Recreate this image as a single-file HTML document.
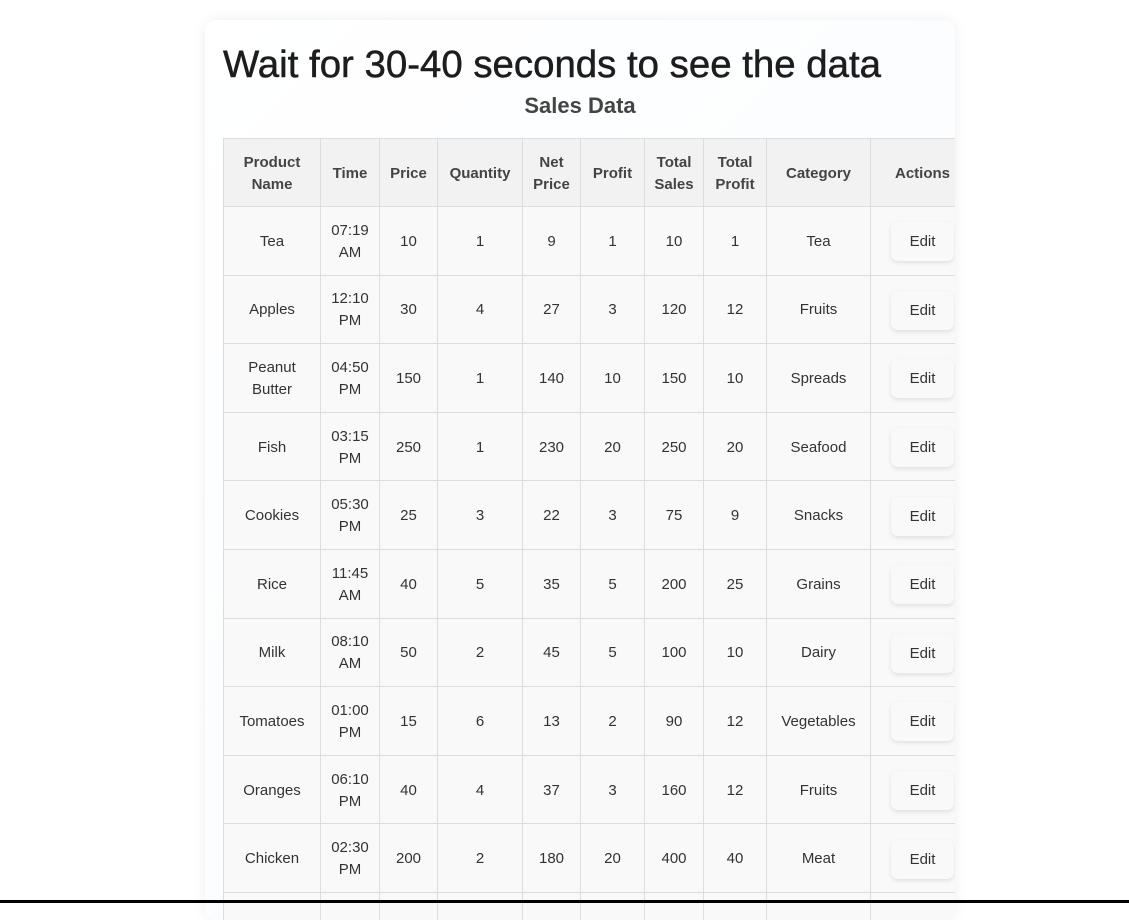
<!DOCTYPE html>
<html><head><meta charset="utf-8"><style>
html,body{margin:0;padding:0;width:1129px;height:903px;overflow:hidden;background:#fff;font-family:"Liberation Sans",sans-serif;}
.card{position:absolute;left:205px;top:20px;width:750px;height:900px;border-radius:12px;background:linear-gradient(135deg,#fff 0%,#f7fbfe 100%);box-shadow:0 0 14px rgba(0,0,0,0.07);overflow:hidden;}
h1{position:absolute;left:18px;top:23px;margin:0;font-size:38.4px;font-weight:normal;color:#1d1d1d;-webkit-text-stroke:0.5px #1d1d1d;white-space:nowrap;}
h2{position:absolute;left:0;width:750px;text-align:center;top:73px;margin:0;font-size:22px;font-weight:bold;color:#444;}
table{position:absolute;left:18px;top:118px;width:751px;border-collapse:collapse;table-layout:fixed;font-size:15px;color:#333;background:#f9f9f9;}
td,th{border:1px solid #ddd;text-align:center;padding:2px 0 0 0;line-height:22px;}
th{background:#f2f2f2;color:#444;font-weight:bold;height:65px;}
td{height:65.6px;}
.b{display:inline-block;width:63px;height:39px;line-height:39px;background:#f9f9f9;border-radius:7px;box-shadow:0 2px 5px rgba(0,0,0,0.1);}
.line{position:absolute;left:0;top:900px;width:1129px;height:3px;background:#000;}
</style></head><body>
<div class="card">
<h1>Wait for 30-40 seconds to see the data</h1>
<h2>Sales Data</h2>
<table>
<colgroup><col style="width:97px"><col style="width:59px"><col style="width:58px"><col style="width:85px"><col style="width:58px"><col style="width:64px"><col style="width:59px"><col style="width:63px"><col style="width:104px"><col style="width:104px"></colgroup>
<tr><th>Product<br>Name</th><th>Time</th><th>Price</th><th>Quantity</th><th>Net<br>Price</th><th>Profit</th><th>Total<br>Sales</th><th>Total<br>Profit</th><th>Category</th><th>Actions</th></tr>
<tr><td>Tea</td><td>07:19<br>AM</td><td>10</td><td>1</td><td>9</td><td>1</td><td>10</td><td>1</td><td>Tea</td><td><span class="b">Edit</span></td></tr>
<tr><td>Apples</td><td>12:10<br>PM</td><td>30</td><td>4</td><td>27</td><td>3</td><td>120</td><td>12</td><td>Fruits</td><td><span class="b">Edit</span></td></tr>
<tr><td>Peanut<br>Butter</td><td>04:50<br>PM</td><td>150</td><td>1</td><td>140</td><td>10</td><td>150</td><td>10</td><td>Spreads</td><td><span class="b">Edit</span></td></tr>
<tr><td>Fish</td><td>03:15<br>PM</td><td>250</td><td>1</td><td>230</td><td>20</td><td>250</td><td>20</td><td>Seafood</td><td><span class="b">Edit</span></td></tr>
<tr><td>Cookies</td><td>05:30<br>PM</td><td>25</td><td>3</td><td>22</td><td>3</td><td>75</td><td>9</td><td>Snacks</td><td><span class="b">Edit</span></td></tr>
<tr><td>Rice</td><td>11:45<br>AM</td><td>40</td><td>5</td><td>35</td><td>5</td><td>200</td><td>25</td><td>Grains</td><td><span class="b">Edit</span></td></tr>
<tr><td>Milk</td><td>08:10<br>AM</td><td>50</td><td>2</td><td>45</td><td>5</td><td>100</td><td>10</td><td>Dairy</td><td><span class="b">Edit</span></td></tr>
<tr><td>Tomatoes</td><td>01:00<br>PM</td><td>15</td><td>6</td><td>13</td><td>2</td><td>90</td><td>12</td><td>Vegetables</td><td><span class="b">Edit</span></td></tr>
<tr><td>Oranges</td><td>06:10<br>PM</td><td>40</td><td>4</td><td>37</td><td>3</td><td>160</td><td>12</td><td>Fruits</td><td><span class="b">Edit</span></td></tr>
<tr><td>Chicken</td><td>02:30<br>PM</td><td>200</td><td>2</td><td>180</td><td>20</td><td>400</td><td>40</td><td>Meat</td><td><span class="b">Edit</span></td></tr>
<tr><td>&nbsp;</td><td>&nbsp;</td><td></td><td></td><td></td><td></td><td></td><td></td><td></td><td></td></tr>
</table>
</div>
<div class="line"></div>
</body></html>
